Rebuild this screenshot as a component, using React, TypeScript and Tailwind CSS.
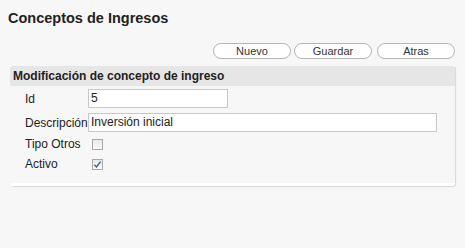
import React from "react";

function Box({ checked }: { checked?: boolean }) {
  return (
    <span className="inline-flex h-[11px] w-[11px] items-center justify-center border border-[#a9a9a9] bg-gradient-to-b from-[#e9e9e9] to-[#fafafa]">
      {checked && (
        <svg width="9" height="9" viewBox="0 0 9 9">
          <path d="M1.5 4.8 L3.5 7 L7.6 1.6" fill="none" stroke="#3a5a8a" strokeWidth="1.3" />
        </svg>
      )}
    </span>
  );
}

export default function App() {
  const btn =
    "h-[16px] w-[78px] rounded-full border border-[#b5b5b5] bg-white text-[11px] leading-none text-[#333] flex items-center justify-center";
  return (
    <div
      className="h-[248px] w-[465px] bg-[#f7f7f7] text-[#222]"
      style={{ fontFamily: '"Liberation Sans", Arial, sans-serif' }}
    >
      <div className="px-[8px] pt-[8px] text-[14.5px] font-bold leading-[20px]">Conceptos de Ingresos</div>
      <div className="mt-[15px] flex justify-end pr-[10px]">
        <div className={btn}>Nuevo</div>
        <div className={btn + " ml-[3px]"}>Guardar</div>
        <div className={btn + " ml-[5px] w-[77px]"}>Atras</div>
      </div>
      <div className="mx-[10px] mt-[7px] w-[445px] rounded-b-[3px] shadow-[1px_1px_1px_rgba(0,0,0,0.12)]">
        <div className="h-[20px] rounded-t-[3px] bg-[#e6e6e6] pl-[3px] text-[12px] font-bold leading-[20px]">
          Modificación de concepto de ingreso
        </div>
        <div className="pb-[9px] pt-[2px] text-[12px]">
          <div className="flex h-[21px] items-center">
            <span className="w-[78px] pl-[15px]">Id</span>
            <div className="h-[19px] w-[140px] border border-[#c8c8c8] bg-white pl-[2px] text-[12px] leading-[17px]">5</div>
          </div>
          <div className="mt-[3px] flex h-[21px] items-center">
            <span className="w-[78px] pl-[15px]">Descripción</span>
            <div className="h-[19px] w-[349px] border border-[#c8c8c8] bg-white pl-[2px] text-[12px] leading-[17px]">Inversión inicial</div>
          </div>
          <div className="mt-[1px] flex h-[20px] items-center">
            <span className="w-[82px] pl-[15px]">Tipo Otros</span>
            <Box />
          </div>
          <div className="flex h-[20px] items-center">
            <span className="w-[82px] pl-[15px]">Activo</span>
            <Box checked />
          </div>
        </div>
        <div className="h-[3px] rounded-b-[3px] bg-white" />
      </div>
    </div>
  );
}
